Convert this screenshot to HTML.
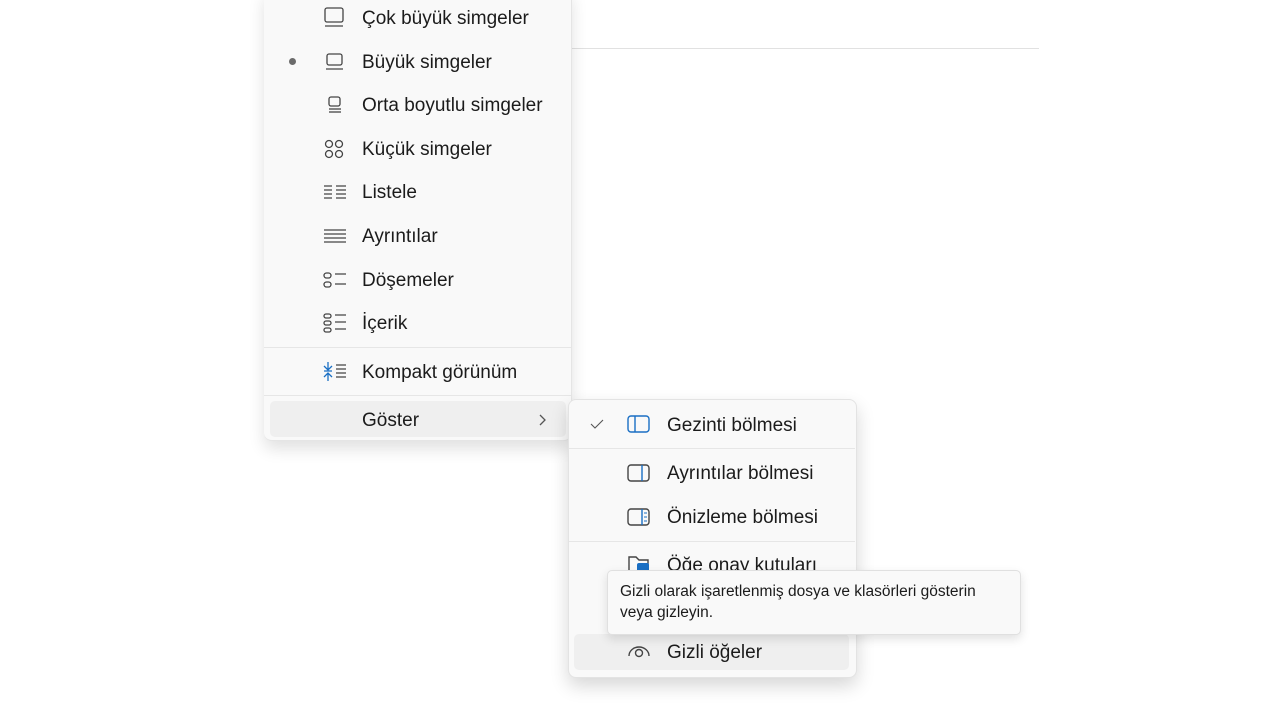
<!DOCTYPE html><html><head><meta charset="utf-8"><style>
body{margin:0;width:1280px;height:720px;background:#fff;position:relative;overflow:hidden;font-family:"Segoe UI","Liberation Sans",sans-serif;color:#1b1b1b}
.a{position:absolute}
.m{left:264px;top:-10px;width:307px;height:450px;background:#f9f9f9;border-right:1px solid #e5e5e5;border-bottom:1px solid #e5e5e5;border-radius:0 0 8px 8px;box-shadow:0 8px 16px rgba(0,0,0,.12)}
.t{font-size:19px;line-height:22px;white-space:nowrap}
.sep{height:1px;background:#e6e6e6}
svg{position:absolute;overflow:visible}
</style></head><body>
<div class="a" style="left:571px;top:48px;width:468px;height:1px;background:#e1e1e1"></div>
<div class="a m"></div>
<div class="a sep" style="left:264px;top:347px;width:307px"></div>
<div class="a sep" style="left:264px;top:395px;width:307px"></div>
<div class="a" style="left:270px;top:401px;width:296px;height:36px;background:#efefef;border-radius:5px"></div>
<div class="a" style="left:289px;top:58px;width:7px;height:7px;border-radius:50%;background:#6b6b6b"></div>
<div class="a t" style="left:362px;top:8px">Çok büyük simgeler</div>
<div class="a t" style="left:362px;top:52px">Büyük simgeler</div>
<div class="a t" style="left:362px;top:95px">Orta boyutlu simgeler</div>
<div class="a t" style="left:362px;top:139px">Küçük simgeler</div>
<div class="a t" style="left:362px;top:182px">Listele</div>
<div class="a t" style="left:362px;top:226px">Ayrıntılar</div>
<div class="a t" style="left:362px;top:270px">Döşemeler</div>
<div class="a t" style="left:362px;top:313px">İçerik</div>
<div class="a t" style="left:362px;top:362px">Kompakt görünüm</div>
<div class="a t" style="left:362px;top:410px">Göster</div>
<svg style="left:0;top:0" width="1280" height="720" fill="none" stroke="#444" stroke-width="1.3">
<rect x="325" y="8" width="18" height="14" rx="2"/><line x1="325" y1="26" x2="343" y2="26"/>
<rect x="327" y="54" width="15" height="11" rx="2"/><line x1="326" y1="69" x2="343" y2="69"/>
<rect x="329" y="97" width="11" height="9" rx="2"/><line x1="329" y1="109" x2="341" y2="109"/><line x1="329" y1="112" x2="341" y2="112"/>
<circle cx="329" cy="144" r="3.5"/><circle cx="339" cy="144" r="3.5"/><circle cx="329" cy="154" r="3.5"/><circle cx="339" cy="154" r="3.5"/>
<path d="M324 186h8M324 190h8M324 194h8M324 198h8M336 186h10M336 190h10M336 194h10M336 198h10"/>
<path d="M324 230h22M324 234h22M324 238h22M324 242h22"/>
<rect x="324" y="273" width="7" height="5" rx="2.5"/><rect x="324" y="282" width="7" height="5" rx="2.5"/><path d="M335 274h11M335 284h11"/>
<rect x="324" y="314" width="7" height="4" rx="2"/><rect x="324" y="321" width="7" height="4" rx="2"/><rect x="324" y="328" width="7" height="4" rx="2"/><path d="M335 315h11M335 322h11M335 329h11"/>
<path d="M336 365h10M336 369h10M336 373h10M336 377h10"/>
<path d="M328 362v8M324 366l4 4 4-4M324 371h8M328 381v-8M324 377l4-4 4 4" stroke="#1a6fc4"/>
<path d="M540 415l5 5-5 5" stroke="#555"/>
</svg>
<div class="a" style="left:568px;top:399px;width:287px;height:277px;background:#f9f9f9;border:1px solid #e3e3e3;border-radius:8px;box-shadow:0 8px 18px rgba(0,0,0,.16)"></div>
<div class="a sep" style="left:569px;top:448px;width:286px"></div>
<div class="a sep" style="left:569px;top:541px;width:286px"></div>
<div class="a" style="left:574px;top:634px;width:275px;height:36px;background:#efefef;border-radius:5px"></div>
<div class="a t" style="left:667px;top:415px">Gezinti bölmesi</div>
<div class="a t" style="left:667px;top:463px">Ayrıntılar bölmesi</div>
<div class="a t" style="left:667px;top:507px">Önizleme bölmesi</div>
<div class="a t" style="left:667px;top:555px">Öğe onay kutuları</div>
<div class="a t" style="left:667px;top:642px">Gizli öğeler</div>
<svg style="left:0;top:0" width="1280" height="720" fill="none" stroke-width="1.4">
<path d="M591 424l4 4 8-8" stroke="#555" stroke-width="1.1"/>
<rect x="628" y="416" width="21" height="16" rx="3" stroke="#1a6fc4"/><line x1="635" y1="416" x2="635" y2="432" stroke="#1a6fc4"/>
<rect x="628" y="465" width="21" height="16" rx="3" stroke="#444"/><line x1="642" y1="465" x2="642" y2="481" stroke="#1a6fc4"/>
<rect x="628" y="509" width="21" height="16" rx="3" stroke="#444"/><line x1="642" y1="509" x2="642" y2="525" stroke="#1a6fc4"/><path d="M644 513h3M644 517h3M644 521h3" stroke="#1a6fc4" stroke-width="1"/>
<path d="M629 570v-13h7l3 3h9v10" stroke="#444"/><rect x="637" y="563" width="12" height="10" rx="2" fill="#1a6fc4" stroke="none"/>
<path d="M629 656a10 9 0 0 1 20 0" stroke="#444"/><circle cx="639" cy="653" r="3.5" stroke="#444"/>
</svg>
<div class="a" style="left:607px;top:570px;width:412px;height:63px;background:#f9f9f9;border:1px solid #e0e0e0;border-radius:5px;box-shadow:0 4px 10px rgba(0,0,0,.12)"></div>
<div class="a" style="left:620px;top:581px;font-size:15.5px;line-height:21px;width:392px">Gizli olarak işaretlenmiş dosya ve klasörleri gösterin veya gizleyin.</div>
</body></html>
